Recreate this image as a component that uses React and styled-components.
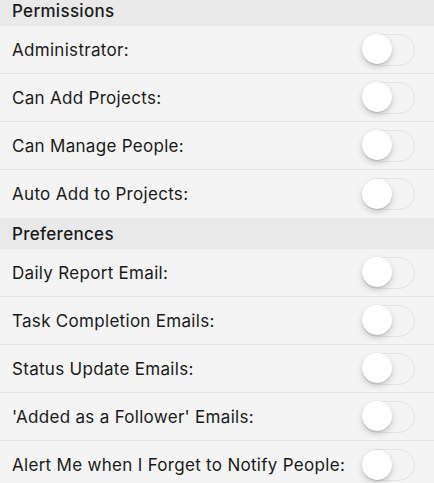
import React from "react";
import styled, { createGlobalStyle } from "styled-components";

const Global = createGlobalStyle`
  html, body { margin: 0; padding: 0; background: #f4f4f4; }
  body { font-family: Inter, "Noto Sans", "Liberation Sans", sans-serif; -webkit-font-smoothing: antialiased; }
  * { box-sizing: border-box; }
`;

const Page = styled.div`
  width: 434px;
  margin-top: -5px;
  display: flex;
  flex-direction: column;
`;

const SectionHeader = styled.div`
  height: 31px;
  background: #e9e9e9;
  display: flex;
  align-items: center;
  padding: 0 12px;
  font-size: 17px;
  letter-spacing: 0.3px;
  font-weight: 500;
  color: #1a1a1a;
`;

const Row = styled.div`
  height: 48px;
  display: flex;
  align-items: center;
  justify-content: space-between;
  padding: 0 19px 0 12px;
  background: #f4f4f4;
  border-bottom: ${(p) => (p.$last ? "none" : "1px solid #e2e2e2")};
`;

const Label = styled.span`
  font-size: 17px;
  letter-spacing: 0.3px;
  color: #1a1a1a;
`;

const Track = styled.div`
  position: relative;
  width: 53px;
  height: 32px;
  border-radius: 16px;
  border: 1.5px solid #e4e4e4;
  background: #f4f4f4;
  flex-shrink: 0;
`;

const Knob = styled.div`
  position: absolute;
  left: -1px;
  top: -0.5px;
  width: 30px;
  height: 30px;
  border-radius: 50%;
  background: #ffffff;
  box-shadow: 0 3px 6px rgba(0, 0, 0, 0.18), 0 1px 1px rgba(0, 0, 0, 0.12);
`;

const Toggle = () => (
  <Track>
    <Knob />
  </Track>
);

const sections = [
  {
    title: "Permissions",
    items: [
      "Administrator:",
      "Can Add Projects:",
      "Can Manage People:",
      "Auto Add to Projects:",
    ],
  },
  {
    title: "Preferences",
    items: [
      "Daily Report Email:",
      "Task Completion Emails:",
      "Status Update Emails:",
      "'Added as a Follower' Emails:",
      "Alert Me when I Forget to Notify People:",
    ],
  },
];

export default function App() {
  return (
    <>
      <Global />
      <Page>
        {sections.map((s) => (
          <React.Fragment key={s.title}>
            <SectionHeader>{s.title}</SectionHeader>
            {s.items.map((label, i) => (
              <Row key={label} $last={i === s.items.length - 1}>
                <Label>{label}</Label>
                <Toggle />
              </Row>
            ))}
          </React.Fragment>
        ))}
      </Page>
    </>
  );
}
